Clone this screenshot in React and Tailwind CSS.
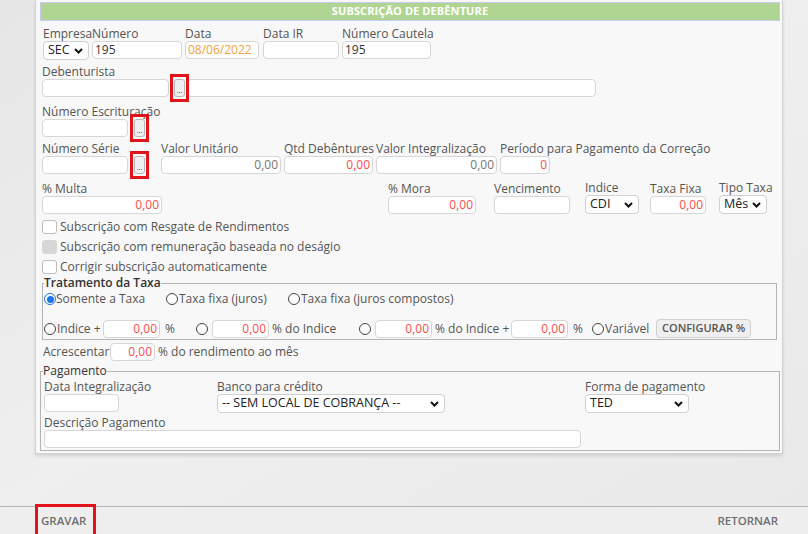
import React from 'react';

function Chevron() {
  return (
    <svg width="9" height="6" viewBox="0 0 9 6" className="shrink-0">
      <path d="M1 1l3.5 3.5L8 1" fill="none" stroke="#111" strokeWidth="2" />
    </svg>
  );
}

function Input({ w, value, color = 'text-[#333]', right = false }) {
  return (
    <div
      className={`${w} h-[18px] shrink-0 bg-white border border-[#d6d6d6] rounded-[4px] px-[2px] flex items-center text-[12px] leading-none ${right ? 'justify-end' : ''} ${color}`}
    >
      {value}
    </div>
  );
}

function Select({ w, value }) {
  return (
    <div className={`${w} h-[19px] shrink-0 bg-white border border-[#d0d0d0] rounded-[4px] pl-[4px] pr-[5px] flex items-center justify-between text-[12.5px] leading-none text-[#222]`}>
      <span className="whitespace-nowrap">{value}</span>
      <Chevron />
    </div>
  );
}

function Dots({ box = false }) {
  return (
    <div className="relative shrink-0">
      <div className="w-[11px] h-[18px] bg-[#efefef] border border-[#b8b8b8] rounded-[3px] flex items-end justify-center pb-[2px] text-[7px] leading-none text-[#333]">
        ...
      </div>
      {box && <span className="absolute -left-[4px] -right-[4px] -top-[5px] -bottom-[5px] border-[3px] border-[#e3131c]" />}
    </div>
  );
}

function Label({ children }) {
  return <div className="h-[14px] text-[12px] leading-[14px] text-[#555] whitespace-nowrap">{children}</div>;
}

function Field({ label, className = '', children }) {
  return (
    <div className={`flex flex-col shrink-0 ${className}`}>
      <Label>{label}</Label>
      {children}
    </div>
  );
}

function Check({ text, disabled = false }) {
  return (
    <div className="h-[20px] flex items-center">
      <span className={`w-[15px] h-[14px] rounded-[3px] border ${disabled ? 'bg-[#d6d6d6] border-[#d6d6d6]' : 'bg-white border-[#bdbdbd]'}`} />
      <span className="ml-[3px] text-[12px] text-[#555] whitespace-nowrap">{text}</span>
    </div>
  );
}

function Radio({ checked = false }) {
  return checked ? (
    <span className="w-[12px] h-[12px] rounded-full border-[1.5px] border-[#1a73e8] bg-white flex items-center justify-center shrink-0">
      <span className="w-[7px] h-[7px] rounded-full bg-[#1a73e8]" />
    </span>
  ) : (
    <span className="w-[12px] h-[12px] rounded-full border border-[#444] bg-white shrink-0" />
  );
}

const red = 'text-[#ff4b4b]';

export default function App() {
  return (
    <div className="w-[808px] h-[534px] flex flex-col bg-[#ebebeb] font-['Open_Sans',sans-serif] overflow-hidden">
      <div className="h-[506px] shrink-0 pl-[35px] bg-gradient-to-br from-[#e6e6e6] via-[#efefef] to-[#e9e9e9]">
        <div className="w-[748px] bg-[#f8f8f8] border-x border-b border-[#d3d3d3] shadow-[0_2px_3px_rgba(0,0,0,0.12)] pt-[2px] pb-[2px] pl-[4px] pr-[2px]">
          <div className="h-[19px] bg-[#b0d592] border border-[#c8caf0] flex items-center justify-center text-[11px] font-bold text-white tracking-[0.1px]">
            SUBSCRIÇÃO DE DEBÊNTURE
          </div>

          <div className="pl-[2px]">
            {/* linha 1 */}
            <div className="flex mt-[6px]">
              <Field label="Empresa" className="ml-[1px] w-[46px]">
                <Select w="w-[46px]" value="SEC" />
              </Field>
              <Field label="Número" className="ml-[3px] w-[90px]">
                <Input w="w-[90px]" value="195" />
              </Field>
              <Field label="Data" className="ml-[3px] w-[74px]">
                <Input w="w-[74px]" value="08/06/2022" color="text-[#f5a03c]" />
              </Field>
              <Field label="Data IR" className="ml-[4px] w-[76px]">
                <Input w="w-[76px]" value="" />
              </Field>
              <Field label="Número Cautela" className="ml-[3px] w-[89px]">
                <Input w="w-[89px]" value="195" />
              </Field>
            </div>

            {/* debenturista */}
            <div className="mt-[5px]">
              <Label>Debenturista</Label>
              <div className="flex items-start">
                <Input w="w-[127px]" value="" />
                <div className="ml-[5px]">
                  <Dots box />
                </div>
                <div className="ml-[2px]">
                  <Input w="w-[409px]" value="" />
                </div>
              </div>
            </div>

            {/* escrituracao */}
            <div className="mt-[8px]">
              <Label>Número Escrituração</Label>
              <div className="flex items-start">
                <Input w="w-[86px]" value="" />
                <div className="ml-[6px]">
                  <Dots box />
                </div>
              </div>
            </div>

            {/* serie */}
            <div className="flex mt-[5px]">
              <Field label="Número Série" className="w-[104px]">
                <div className="flex items-start">
                  <Input w="w-[86px]" value="" />
                  <div className="ml-[6px]">
                    <Dots box />
                  </div>
                </div>
              </Field>
              <Field label="Valor Unitário" className="ml-[15px] w-[120px]">
                <Input w="w-[120px]" value="0,00" right color="text-[#777]" />
              </Field>
              <Field label="Qtd Debêntures" className="ml-[3px] w-[89px]">
                <Input w="w-[89px]" value="0,00" right color={red} />
              </Field>
              <Field label="Valor Integralização" className="ml-[3px] w-[121px]">
                <Input w="w-[121px]" value="0,00" right color="text-[#777]" />
              </Field>
              <Field label="Período para Pagamento da Correção" className="ml-[3px] w-[50px]">
                <Input w="w-[50px]" value="0" right color={red} />
              </Field>
            </div>

            {/* multa */}
            <div className="flex items-end mt-[7px]">
              <Field label="% Multa" className="w-[120px]">
                <Input w="w-[120px]" value="0,00" right color={red} />
              </Field>
              <Field label="% Mora" className="ml-[226px] w-[88px]">
                <Input w="w-[88px]" value="0,00" right color={red} />
              </Field>
              <Field label="Vencimento" className="ml-[18px] w-[76px]">
                <Input w="w-[76px]" value="" />
              </Field>
              <Field label="Indice" className="ml-[15px] w-[54px]">
                <Select w="w-[54px]" value="CDI" />
              </Field>
              <Field label="Taxa Fixa" className="ml-[11px] w-[56px]">
                <Input w="w-[56px]" value="0,00" right color={red} />
              </Field>
              <Field label="Tipo Taxa" className="ml-[13px] w-[48px]">
                <Select w="w-[48px]" value="Mês" />
              </Field>
            </div>

            {/* checkboxes */}
            <div className="mt-[3px]">
              <Check text="Subscrição com Resgate de Rendimentos" />
              <Check text="Subscrição com remuneração baseada no deságio" disabled />
              <Check text="Corrigir subscrição automaticamente" />
            </div>

            {/* tratamento da taxa */}
            <fieldset className="-mt-[1px] w-[735px] border border-[#b4b4b4] pl-[1px] pb-[1px]">
              <legend className="text-[12px] leading-[14px] font-semibold text-[#333]">Tratamento da Taxa</legend>
              <div className="flex items-center h-[16px] mt-[1px] text-[12px] text-[#555] whitespace-nowrap">
                <div className="w-[122px] flex items-center">
                  <Radio checked />
                  <span>Somente a Taxa</span>
                </div>
                <div className="w-[122px] flex items-center">
                  <Radio />
                  <span className="ml-[1px]">Taxa fixa (juros)</span>
                </div>
                <div className="flex items-center">
                  <Radio />
                  <span className="ml-[1px]">Taxa fixa (juros compostos)</span>
                </div>
              </div>
              <div className="flex items-center mt-[12px] text-[12px] text-[#555] whitespace-nowrap">
                <Radio />
                <span className="w-[46px] ml-[1px]">Indice +</span>
                <Input w="w-[57px]" value="0,00" right color={red} />
                <span className="ml-[5px] w-[31px]">%</span>
                <Radio />
                <span className="w-[4px]" />
                <Input w="w-[57px]" value="0,00" right color={red} />
                <span className="ml-[3px] w-[87px]">% do Indice</span>
                <Radio />
                <span className="w-[4px]" />
                <Input w="w-[57px]" value="0,00" right color={red} />
                <span className="ml-[3px] w-[76px]">% do Indice +</span>
                <Input w="w-[57px]" value="0,00" right color={red} />
                <span className="ml-[5px] w-[19px]">%</span>
                <Radio />
                <span className="ml-[1px] w-[51px]">Variável</span>
                <div className="h-[19px] px-[5px] bg-[#efefef] border border-[#d0d0d0] rounded-[4px] flex items-center text-[11px] font-semibold text-[#555]">
                  CONFIGURAR %
                </div>
              </div>
            </fieldset>

            {/* acrescentar */}
            <div className="flex items-center mt-[3px] text-[12px] text-[#555] whitespace-nowrap">
              <span className="ml-[1px] w-[67px]">Acrescentar</span>
              <Input w="w-[45px]" value="0,00" right color={red} />
              <span className="ml-[3px]">% do rendimento ao mês</span>
            </div>

            {/* pagamento */}
            <fieldset className="mt-[3px] -ml-[2px] w-[740px] border border-[#b4b4b4] pl-[2px] pb-[2px]">
              <legend className="text-[12px] leading-[14px] text-[#333]">Pagamento</legend>
              <div className="flex mt-[2px]">
                <Field label="Data Integralização" className="w-[75px] ml-[1px]">
                  <Input w="w-[75px]" value="" />
                </Field>
                <Field label="Banco para crédito" className="ml-[98px] w-[228px]">
                  <Select w="w-[228px]" value="-- SEM LOCAL DE COBRANÇA --" />
                </Field>
                <Field label="Forma de pagamento" className="ml-[140px] w-[104px]">
                  <Select w="w-[104px]" value="TED" />
                </Field>
              </div>
              <Field label="Descrição Pagamento" className="mt-[3px] ml-[1px]">
                <Input w="w-[537px]" value="" />
              </Field>
            </fieldset>
          </div>
        </div>
      </div>

      <div className="flex-1 border-t border-[#b3b3b3] bg-[#eeeeee] flex items-center justify-between pl-[41px] pr-[30px] text-[11.5px] font-semibold text-[#6f6f6f]">
        <div className="relative">
          GRAVAR
          <span className="absolute -left-[6px] -right-[10px] -top-[8px] -bottom-[10px] border-[3px] border-[#e3131c]" />
        </div>
        <div>RETORNAR</div>
      </div>
    </div>
  );
}
